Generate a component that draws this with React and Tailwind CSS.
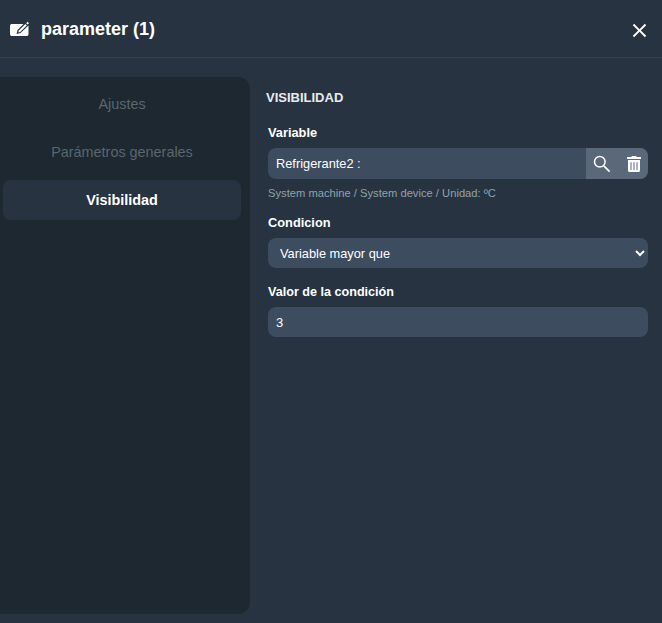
import { FaTrashAlt } from 'react-icons/fa';
import { MdClose } from 'react-icons/md';

const tabs = [
  { label: 'Ajustes', active: false },
  { label: 'Parámetros generales', active: false },
  { label: 'Visibilidad', active: true },
];

const EditIcon = () => (
  <svg width="20" height="16" viewBox="0 0 20 16" className="block">
    <path
      d="M2 3H13.5L7.5 9L6.5 13L10.5 12L18.5 4.5V13C18.5 14.4 17.6 15 16.5 15H2C1 15 0 14.4 0 13V5C0 3.6 1 3 2 3Z"
      fill="white"
    />
    <path d="M8.8 9.6L15.4 3L16.8 4.4L10.2 11L8.3 11.5Z" fill="white" />
    <path d="M16.2 2.2L17.6 0.8L19 2.2L17.6 3.6Z" fill="white" />
  </svg>
);

const SearchIcon = () => (
  <svg width="18" height="18" viewBox="0 0 18 18" fill="none" stroke="white" className="block">
    <circle cx="6.8" cy="6.8" r="5.3" strokeWidth="1.5" />
    <path d="M10.8 10.8L16.6 16.6" strokeWidth="1.7" />
  </svg>
);

const App = () => {
  return (
    <div className="w-[662px] h-[623px] overflow-hidden bg-[#283342] font-['Liberation_Sans',Arial,sans-serif] text-white">
      <header className="h-[58px] flex items-center justify-between pl-[10px] pr-[11px] border-b border-[#323f4f]">
        <div className="flex items-center gap-[11px] pt-[1px]">
          <EditIcon />
          <h1 className="text-[18px] font-bold">parameter (1)</h1>
        </div>
        <MdClose className="mt-[3px] text-[#fff]" size={23} />
      </header>

      <div className="flex pt-[19px]">
        <aside className="-ml-3 w-[262px] h-[537px] shrink-0 rounded-xl bg-[#1d2831] pl-[15px] pr-[9px] pt-[7px] flex flex-col gap-2">
          {tabs.map((tab) => (
            <div
              key={tab.label}
              className={`h-10 flex items-center justify-center rounded-lg pt-[2px] text-[14.4px] ${
                tab.active ? 'bg-[#283342] font-bold text-white' : 'text-[#5a6670]'
              }`}
            >
              {tab.label}
            </div>
          ))}
        </aside>

        <main className="flex-1 pl-[16px] pr-[14px] pt-[13px]">
          <h2 className="text-[13px] leading-4 font-bold text-[#e8ebee]">VISIBILIDAD</h2>

          <label className="block mt-[19px] ml-[2px] text-[12.8px] leading-4 font-bold">Variable</label>
          <div className="mt-[7px] ml-[2px] h-[31px] flex rounded-lg overflow-hidden bg-[#3d4c5f]">
            <input
              readOnly
              value="Refrigerante2 :"
              className="flex-1 min-w-0 bg-transparent px-2 text-[12.8px] text-white outline-none"
            />
            <div className="w-[62px] bg-[#5a6879] flex items-center gap-[15px] pl-[7px]">
              <SearchIcon />
              <FaTrashAlt size={16} className="text-[#fff]" />
            </div>
          </div>
          <p className="mt-[8px] ml-[2px] text-[11.2px] leading-3 text-[#8fa3ab]">
            System machine / System device / Unidad: ºC
          </p>

          <label className="block mt-[16px] ml-[2px] text-[12.8px] leading-4 font-bold">Condicion</label>
          <select
            defaultValue="mayor"
            className="block mt-[7px] ml-[2px] w-[380px] h-[30px] rounded-lg bg-[#3d4c5f] pl-2 text-[12.8px] text-white outline-none"
          >
            <option value="mayor">Variable mayor que</option>
          </select>

          <label className="block mt-[16px] ml-[2px] text-[12.6px] leading-4 font-bold">Valor de la condición</label>
          <input
            readOnly
            value="3"
            className="block mt-[7px] ml-[2px] w-[380px] h-[30px] rounded-lg bg-[#3d4c5f] px-2 text-[13px] text-white outline-none"
          />
        </main>
      </div>
    </div>
  );
};

export default App;
